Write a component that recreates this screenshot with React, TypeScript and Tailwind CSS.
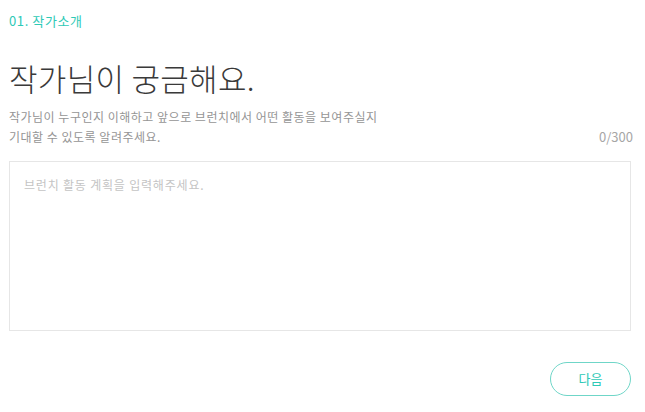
import { useState } from 'react';

const kr = "font-['Noto_Sans_CJK_KR','Noto_Sans',sans-serif]";

export default function App() {
  const [text, setText] = useState('');

  return (
    <div className={`min-h-[412px] w-[645px] bg-white ${kr}`}>
      <div className="px-[9px] pt-[12px]">
        <p className="text-[13px] leading-[18px] tracking-[0.6px] text-[#2ec9b6]">01. 작가소개</p>

        <h1 className="mt-[28px] text-[31px] font-light leading-[40px] tracking-[0.3px] text-[#3a3a3a]">
          작가님이 궁금해요.
        </h1>

        <div className="mt-[9px] flex items-end justify-between">
          <p className="text-[12px] leading-[20px] tracking-[0.5px] text-[#959595]">
            작가님이 누구인지 이해하고 앞으로 브런치에서 어떤 활동을 보여주실지
            <br />
            기대할 수 있도록 알려주세요.
          </p>
          <span className="pr-[3px] text-[13px] leading-[20px] text-[#a6a6a6]">{text.length}/300</span>
        </div>

        <textarea
          value={text}
          maxLength={300}
          onChange={(e) => setText(e.target.value)}
          placeholder="브런치 활동 계획을 입력해주세요."
          className="mt-[14px] block h-[170px] w-[622px] resize-none border border-[#e6e6e6] px-[14px] py-[14px] text-[12px] leading-[18px] tracking-[0.8px] text-[#333] outline-none placeholder:text-[#c4c4c4]"
        />

        <div className="mt-[31px] flex justify-end pr-[5px]">
          <button
            type="button"
            className="flex h-[34px] w-[81px] items-center justify-center rounded-full border border-[#6fd6c8] text-[13px] text-[#2ec9b6]"
          >
            다음
          </button>
        </div>
      </div>
    </div>
  );
}
